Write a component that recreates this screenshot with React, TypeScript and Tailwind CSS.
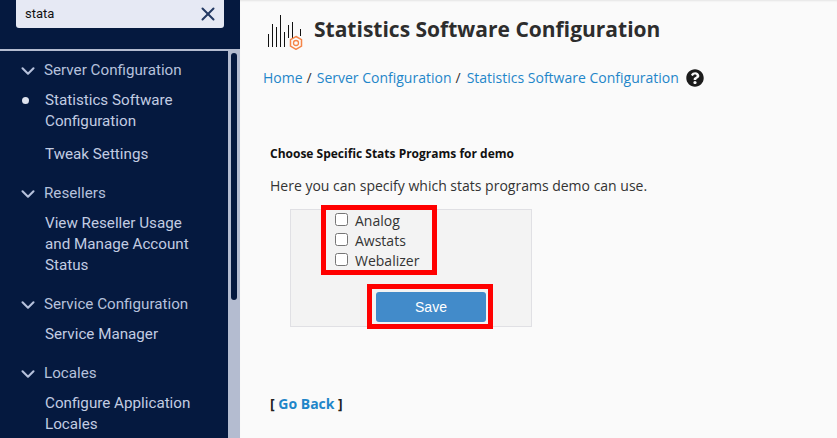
import { ChevronDown, X } from "lucide-react";
import { FaQuestionCircle } from "react-icons/fa";

function StatsIcon() {
  return (
    <svg width="36" height="36" viewBox="0 0 36 36" fill="none">
      <path
        d="M1.500 20v13M5.500 10v23M9.500 13v20M13.500 1v32M17.500 18v15M21.500 11v13M25.500 8v16M33.500 15v7"
        stroke="#111"
        strokeWidth="1"
      />
      <path d="M29 22.500l5.500 3.200v6.400l-5.500 3.200-5.500-3.200v-6.400z" stroke="#f58548" strokeWidth="1.500" />
      <circle cx="29" cy="29" r="2.500" stroke="#f58548" strokeWidth="1.300" />
    </svg>
  );
}

function Section({ title }: { title: string }) {
  return (
    <div className="flex h-[21px] items-center text-[15.2px] leading-[21px] text-[#b6c1dc]">
      <ChevronDown size={22} strokeWidth={2.300} className="ml-[17px] mr-[5px] text-[#b6c1dc]" />
      <span>{title}</span>
    </div>
  );
}

function Item({ children, active }: { children: React.ReactNode; active?: boolean }) {
  return (
    <div className="relative pl-[45px] pr-2 text-[15.2px] leading-[21px] text-[#c2cce2]">
      {active && <span className="absolute left-[22px] top-[7px] h-[7px] w-[7px] rounded-full bg-[#dfe3ee]" />}
      {children}
    </div>
  );
}

function Sidebar() {
  return (
    <aside className="flex h-[438px] w-[240px] shrink-0 flex-col overflow-hidden bg-[#05193f] font-['Roboto',sans-serif]">
      <div className="h-[49px] shrink-0">
        <div className="ml-4 flex h-[28px] w-[208px] items-center justify-between rounded-b-[3px] bg-[#e6e9f4] pl-[9px] pr-[5px]">
          <span className="text-[13px] text-[#111]">stata</span>
          <X size={22} strokeWidth={2.200} className="text-[#243a63]" />
        </div>
      </div>
      <div className="h-[2px] shrink-0 bg-[#b4bcd0]" />
      <div className="flex min-h-0 flex-1">
        <nav className="w-[228px] pt-[9px]">
          <Section title="Server Configuration" />
          <div className="mt-[9px]">
            <Item active>
              Statistics Software
              <br />
              Configuration
            </Item>
          </div>
          <div className="mt-[12px]">
            <Item>Tweak Settings</Item>
          </div>
          <div className="mt-[18px]">
            <Section title="Resellers" />
          </div>
          <div className="mt-[9px]">
            <Item>
              View Reseller Usage
              <br />
              and Manage Account
              <br />
              Status
            </Item>
          </div>
          <div className="mt-[18px]">
            <Section title="Service Configuration" />
          </div>
          <div className="mt-[9px]">
            <Item>Service Manager</Item>
          </div>
          <div className="mt-[18px]">
            <Section title="Locales" />
          </div>
          <div className="mt-[9px]">
            <Item>
              Configure Application
              <br />
              Locales
            </Item>
          </div>
        </nav>
        <div className="w-[12px] bg-[#b4bcd0] pl-[3px] pt-[2px]">
          <div className="h-[247px] w-[6px] rounded-full bg-[#05193f]" />
        </div>
      </div>
    </aside>
  );
}

function Main() {
  return (
    <main className="h-[438px] flex-1 overflow-hidden bg-[#fafafa] font-['Open_Sans',sans-serif] shadow-[inset_0_2px_2px_-1px_#e4e4e4]">
      <div className="flex items-center pl-[27px] pt-[14px]">
        <StatsIcon />
        <h1 className="ml-[11px] -mt-[6px] text-[21px] font-bold leading-[30px] text-[#2d2d2d]">
          Statistics Software Configuration
        </h1>
      </div>
      <div className="mt-[18px] flex items-center pl-[23px] text-[14px] leading-[20px] text-[#1f86c9]">
        <a>Home</a>
        <span className="ml-[4px] mr-[5px] text-[#333]">/</span>
        <a>Server Configuration</a>
        <span className="ml-[4px] mr-[6px] text-[#333]">/</span>
        <a>Statistics Software Configuration</a>
        <FaQuestionCircle size={18} className="ml-[7px] text-[#1c1c1c]" />
      </div>
      <div className="pl-[30px] pt-[57px]">
        <p className="text-[12px] font-bold leading-[17px] text-[#111]">Choose Specific Stats Programs for demo</p>
        <p className="mt-[14px] text-[14px] leading-[20px] text-[#333]">Here you can specify which stats programs demo can use.</p>
        <form className="mt-[13px] ml-[20px] h-[118px] w-[242px] border border-[#e0e0e4] bg-[#f3f3f3]">
          <div className="relative">
            <div className="absolute -top-[5px] left-[30px] flex h-[70px] w-[116px] flex-col border-[5px] border-[#ff0000] pl-[9px]">
              {["Analog", "Awstats", "Webalizer"].map((name) => (
                <label key={name} className="flex h-[20px] items-center text-[14px] text-[#333]">
                  <input type="checkbox" className="mb-[2px] mr-[7px] h-[13px] w-[13px]" />
                  {name}
                </label>
              ))}
            </div>
            <div className="absolute left-[76px] top-[74px] flex h-[45px] w-[126px] items-start border-[5px] border-[#ff0000] pl-[4px] pt-[3px]">
              <button
                type="button"
                className="h-[30px] w-[110px] rounded-[3px] bg-[#428bca] font-['Liberation_Sans',sans-serif] text-[14px] text-white"
              >
                Save
              </button>
            </div>
          </div>
        </form>
        <p className="mt-[67px] text-[14px] font-bold leading-[20px] text-[#222]">
          [ <a className="text-[#1f86c9]">Go Back</a> ]
        </p>
      </div>
    </main>
  );
}

export default function App() {
  return (
    <div className="flex h-[438px] w-[837px] overflow-hidden">
      <Sidebar />
      <Main />
    </div>
  );
}
